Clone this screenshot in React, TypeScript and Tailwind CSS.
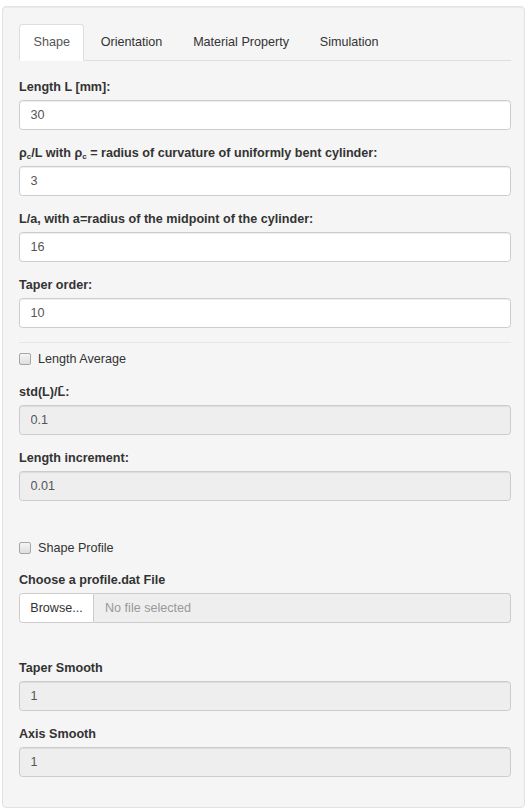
import React from 'react'

const tabs = ['Shape', 'Orientation', 'Material Property', 'Simulation']

function Field({ label, value, disabled = false }: { label: React.ReactNode; value: string; disabled?: boolean }) {
  return (
    <div className="mb-[13.5px]">
      <label className="block font-bold leading-[18px] mb-[4.5px] text-[#333]">{label}</label>
      <input
        readOnly
        value={value}
        disabled={disabled}
        className={
          'block w-full h-[30px] px-[10.5px] border border-[#ccc] rounded-[3.5px] text-[#555] outline-none ' +
          (disabled ? 'bg-[#eee] shadow-[inset_0_1px_1px_rgba(0,0,0,0.075)]' : 'bg-white shadow-[inset_0_1px_1px_rgba(0,0,0,0.075)]')
        }
      />
    </div>
  )
}

function Check({ label }: { label: string }) {
  return (
    <div className="flex items-center h-[18px]">
      <span className="w-[12px] h-[12px] rounded-[2px] border border-[#a6a6a6] bg-gradient-to-b from-[#f4f4f4] to-[#dedede] mr-[7px]" />
      <span className="text-[#333] leading-[18px]">{label}</span>
    </div>
  )
}

export default function App() {
  return (
    <div
      className="bg-white pl-[2px] pr-[5px] pt-[6px] pb-[1px] text-[12.6px]"
      style={{ fontFamily: '"Liberation Sans", Arial, sans-serif' }}
    >
      <div className="w-[523px] bg-[#f5f5f5] border border-[#e3e3e3] rounded-[4px] shadow-[inset_0_1px_1px_rgba(0,0,0,0.05)] pl-[16px] pr-[13px] pt-[17px] pb-[16px]">
        {/* Tabs */}
        <div className="flex border-b border-[#ddd] h-[37px]">
          {tabs.map((t, i) => (
            <div
              key={t}
              className={
                'px-[13.5px] pt-[8px] pb-[9px] leading-[18px] border rounded-t-[3.5px] mr-[1.8px] h-[37px] ' +
                (i === 0
                  ? 'bg-white border-[#ddd] border-b-white text-[#555]'
                  : 'border-transparent text-[#333]')
              }
            >
              {t}
            </div>
          ))}
        </div>

        <div className="pt-[16.5px]">
          <Field label="Length L [mm]:" value="30" />
          <Field
            label={
              <>
                ρ<sub className="text-[8px]">c</sub>/L with ρ<sub className="text-[8px]">c</sub> = radius of curvature of uniformly bent cylinder:
              </>
            }
            value="3"
          />
          <Field label="L/a, with a=radius of the midpoint of the cylinder:" value="16" />
          <Field label="Taper order:" value="10" />

          <div className="border-t border-[#e6e6e6] mt-[0.5px]" />
          <div className="mt-[7.5px] mb-[14.5px]">
            <Check label="Length Average" />
          </div>

          <Field label={<>std(L)/L&#772;:</>} value="0.1" disabled />
          <Field label="Length increment:" value="0.01" disabled />

          <div className="mt-[37.5px] mb-[14px]">
            <Check label="Shape Profile" />
          </div>

          <div className="mb-[13.5px]">
            <label className="block font-bold leading-[18px] mb-[4.5px] text-[#333]">Choose a profile.dat File</label>
            <div className="flex h-[30px]">
              <div className="w-[75px] flex items-center justify-center bg-white border border-[#ccc] rounded-l-[3.5px] text-[#333]">
                Browse...
              </div>
              <div className="flex-1 flex items-center px-[11px] bg-[#eee] border border-l-0 border-[#ccc] rounded-r-[3.5px] text-[#999]">
                No file selected
              </div>
            </div>
          </div>

          <div className="h-[22px]" />
          <Field label="Taper Smooth" value="1" disabled />
          <Field label="Axis Smooth" value="1" disabled />
        </div>
      </div>
    </div>
  )
}
